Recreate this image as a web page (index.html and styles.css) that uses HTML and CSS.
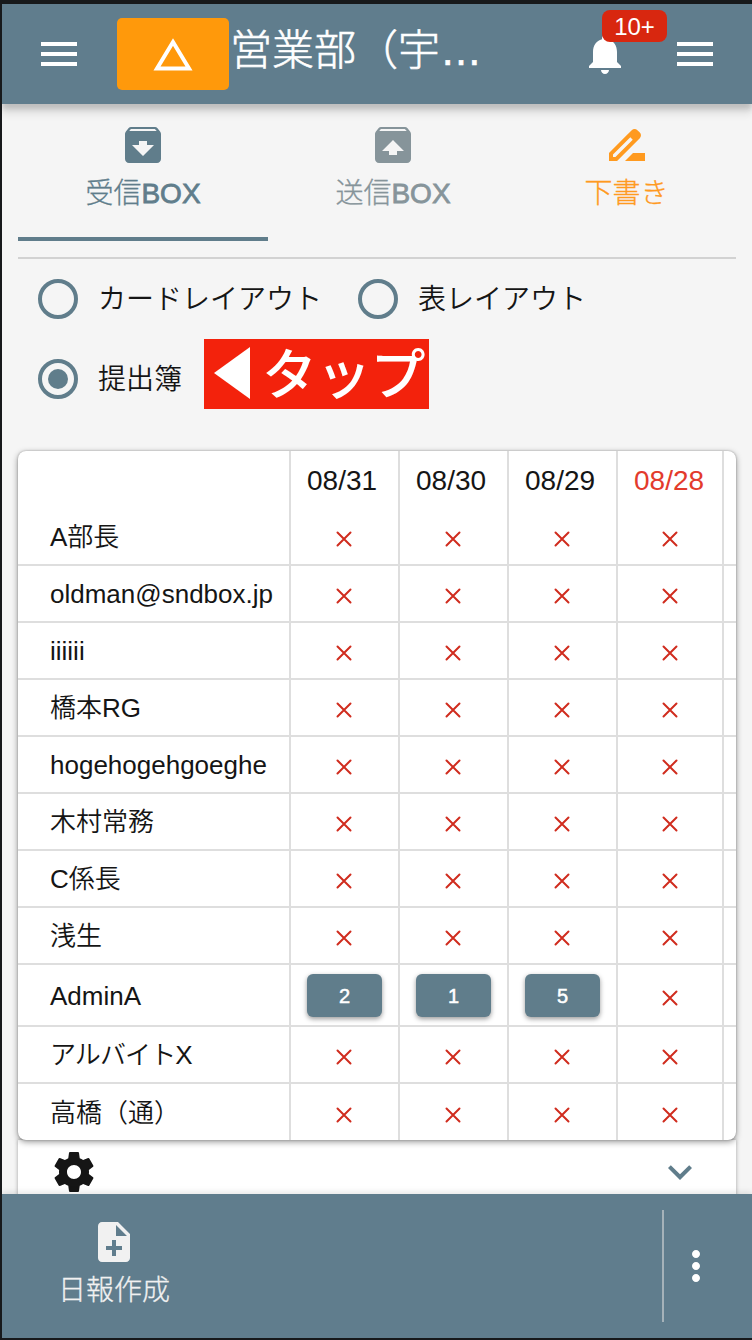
FILE: index.html
```
<!DOCTYPE html>
<html lang="ja">
<head>
<meta charset="utf-8">
<title>提出簿</title>
<link rel="stylesheet" href="styles.css">
</head>
<body>
<div class="app">
  <header class="topbar">
    <svg class="icon menu-left" viewBox="0 0 24 24"><path d="M3 18h18v-2H3v2zm0-5h18v-2H3v2zm0-7v2h18V6H3z"/></svg>
    <button class="alert-btn"><svg width="42" height="34" viewBox="0 0 42 34"><path d="M21 5 37 31.500H5z" fill="none" stroke="#fff" stroke-width="4"/></svg></button>
    <h1 class="title">営業部（宇…</h1>
    <div class="bell">
      <svg class="icon" viewBox="0 0 24 24"><path d="M12 22c1.100 0 2-.9 2-2h-4c0 1.100.89 2 2 2zm6-6v-5c0-3.070-1.640-5.640-4.500-6.320V4c0-.83-.67-1.500-1.500-1.500s-1.500.67-1.500 1.500v.68C7.630 5.360 6 7.920 6 11v5l-2 2v1h16v-1l-2-2z"/></svg>
      <span class="badge">10+</span>
    </div>
    <svg class="icon menu-right" viewBox="0 0 24 24"><path d="M3 18h18v-2H3v2zm0-5h18v-2H3v2zm0-7v2h18V6H3z"/></svg>
  </header>

  <main class="content">
    <nav class="tabs">
      <a class="tab active">
        <svg class="icon" viewBox="0 0 24 24"><path d="M20.540 5.230l-1.390-1.680C18.880 3.210 18.470 3 18 3H6c-.47 0-.88.21-1.160.55L3.460 5.230C3.170 5.570 3 6.020 3 6.500V19c0 1.100.9 2 2 2h14c1.100 0 2-.9 2-2V6.500c0-.48-.17-.93-.46-1.270zM12 17.500L6.500 12H10v-2h4v2h3.500L12 17.500zM5.120 5l.81-1h12l.94 1H5.120z"/></svg>
        <span>受信<b>BOX</b></span>
      </a>
      <a class="tab">
        <svg class="icon" viewBox="0 0 24 24"><path d="M20.550 5.220l-1.390-1.680C18.880 3.210 18.470 3 18 3H6c-.47 0-.88.21-1.150.55L3.460 5.220C3.170 5.570 3 6.010 3 6.500V19c0 1.100.89 2 2 2h14c1.100 0 2-.9 2-2V6.500c0-.49-.17-.93-.45-1.280zM12 9.500l5.500 5.500H14v2h-4v-2H6.500L12 9.500zM5.120 5l.82-1h12l.93 1H5.120z"/></svg>
        <span>送信<b>BOX</b></span>
      </a>
      <a class="tab draft">
        <svg class="icon" viewBox="0 0 24 24"><path d="M18.410 5.800L17.200 4.590c-.78-.78-2.050-.78-2.830 0l-2.680 2.680L3 15.960V20h4.040l8.740-8.740 2.630-2.630c.79-.78.79-2.050 0-2.830zM6.210 18H5v-1.210l8.660-8.660 1.210 1.210L6.210 18zM11 20l4-4h6v4H11z"/></svg>
        <span>下書き</span>
      </a>
    </nav>

    <div class="layouts">
      <label class="choice"><i class="radio"></i><span>カードレイアウト</span></label>
      <label class="choice"><i class="radio"></i><span>表レイアウト</span></label>
      <label class="choice"><i class="radio on"></i><span>提出簿</span></label>
      <div class="tap"><svg width="37" height="52" viewBox="0 0 37 52"><path d="M0 26 36 0v52z" fill="#fff"/></svg><span>タップ</span></div>
    </div>

    <section class="sheet" id="sheet"></section>

    <section class="settings">
      <svg class="icon gear" viewBox="0 0 24 24"><path d="M19.430 12.980c.04-.32.07-.64.07-.98s-.03-.66-.07-.98l2.110-1.650c.19-.15.24-.42.12-.64l-2-3.460c-.12-.22-.39-.3-.61-.22l-2.490 1c-.52-.4-1.080-.73-1.690-.98l-.38-2.650C14.460 2.180 14.250 2 14 2h-4c-.25 0-.46.18-.49.42l-.38 2.650c-.61.25-1.170.59-1.690.98l-2.490-1c-.23-.09-.49 0-.61.22l-2 3.460c-.13.22-.07.49.12.64l2.110 1.650c-.04.32-.07.65-.07.98s.03.66.07.98l-2.110 1.650c-.19.15-.24.42-.12.64l2 3.460c.12.22.39.3.61.22l2.490-1c.52.4 1.080.73 1.690.98l.38 2.650c.03.24.24.42.49.42h4c.25 0 .46-.18.49-.42l.38-2.650c.61-.25 1.170-.59 1.690-.98l2.490 1c.23.09.49 0 .61-.22l2-3.460c.12-.22.07-.49-.12-.64l-2.110-1.650zM12 15.500c-1.930 0-3.500-1.570-3.500-3.500s1.570-3.500 3.500-3.500 3.500 1.570 3.500 3.500-1.570 3.500-3.500 3.500z"/></svg>
      <svg class="icon chevron" viewBox="0 0 24 24"><path d="M7.410 8.590L12 13.170l4.590-4.580L18 10l-6 6-6-6 1.410-1.410z"/></svg>
    </section>
  </main>

  <footer class="bottombar">
    <div class="create">
      <svg class="icon" viewBox="0 0 24 24"><path d="M14 2H6c-1.100 0-1.990.9-1.990 2L4 20c0 1.100.89 2 1.990 2H18c1.100 0 2-.9 2-2V8l-6-6zm2 14h-3v3h-2v-3H8v-2h3v-3h2v3h3v2zm-3-7V3.500L18.500 9H13z"/></svg>
      <span>日報作成</span>
    </div>
    <div class="more"><svg class="icon" viewBox="0 0 24 24"><path d="M12 8c1.100 0 2-.9 2-2s-.9-2-2-2-2 .9-2 2 .9 2 2 2zm0 2c-1.100 0-2 .9-2 2s.9 2 2 2 2-.9 2-2-.9-2-2-2zm0 6c-1.100 0-2 .9-2 2s.9 2 2 2 2-.9 2-2-.9-2-2-2z"/></svg></div>
  </footer>
</div>
<script src="sheet.js"></script>
</body>
</html>
```
FILE: styles.css
```
* { box-sizing: border-box; }
body {
  margin: 0;
  font-family: "Liberation Sans", "Noto Sans CJK JP", sans-serif;
  color: #151515;
}
.app {
  width: 752px;
  height: 1340px;
  border: solid #17191b;
  border-width: 4px 0 2px 2px;
  background: #f5f5f5;
  display: flex;
  flex-direction: column;
  overflow: hidden;
}
.icon { width: 48px; height: 48px; fill: currentColor; display: block; flex: none; }

.topbar {
  height: 100px;
  flex: none;
  background: #607d8d;
  color: #fff;
  display: flex;
  align-items: center;
  padding: 0 33px;
  box-shadow: 0 5px 5px rgba(0,0,0,.15), 0 10px 8px rgba(0,0,0,.09);
  z-index: 1;
}
.alert-btn {
  width: 112px;
  height: 72px;
  margin-left: 34px;
  padding: 0;
  border: 0;
  border-radius: 5px;
  background: #ff990b;
  display: flex;
  align-items: center;
  justify-content: center;
}
.title {
  margin: 0 0 6px 1px;
  flex: 1;
  font-size: 42px;
  line-height: 60px;
  font-weight: 300;
  white-space: nowrap;
  -webkit-text-stroke: .6px currentColor;
}
.bell { position: relative; margin-right: 42px; }
.badge {
  position: absolute;
  left: 21px;
  top: -20px;
  width: 65px;
  height: 32px;
  border-radius: 8px;
  background: #d8270f;
  font-size: 24px;
  line-height: 34px;
  text-align: center;
}

.content { flex: 1; min-height: 0; overflow: hidden; padding: 0 16px; }
.tabs {
  display: grid;
  grid-template-columns: 250px 250px 216px;
  height: 155px;
  padding-top: 17px;
  border-bottom: 2px solid #d2d2d2;
  margin-bottom: 20px;
}
.tab {
  height: 120px;
  display: flex;
  flex-direction: column;
  align-items: center;
  font-size: 28px;
  line-height: 40px;
  font-weight: 300;
  color: #86949a;
  -webkit-text-stroke: .3px currentColor;
}
.tab span { margin-top: 5px; }
.tab b { font-weight: 400; -webkit-text-stroke: .8px currentColor; }
.tab.active { color: #607d8b; border-bottom: 4px solid #607d8b; }
.tab.draft { color: #ff9a1f; padding-left: 1px; }

.layouts {
  display: flex;
  flex-wrap: wrap;
  row-gap: 40px;
  padding-left: 20px;
  height: 172px;
  align-content: flex-start;
}
.choice {
  display: flex;
  align-items: center;
  gap: 20px;
  height: 40px;
  margin-right: 36px;
  font-size: 28px;
  line-height: 40px;
  font-weight: 350;
  white-space: nowrap;
}
.choice span { padding-top: 1px; }
.choice:nth-child(2) { margin-right: 100px; }
.choice:nth-child(3) { margin-right: 22px; }
.radio {
  width: 40px;
  height: 40px;
  border: 4px solid #607d8b;
  border-radius: 50%;
  display: flex;
  align-items: center;
  justify-content: center;
}
.radio.on::after { content: ""; width: 20px; height: 20px; border-radius: 50%; background: #607d8b; }
.tap {
  width: 225px;
  height: 70px;
  margin: -20px 0 -10px;
  padding-left: 10px;
  background: #f3220c;
  color: #fff;
  display: flex;
  align-items: center;
  gap: 11px;
  font: 500 55px/68px "Noto Sans CJK JP", sans-serif;
  letter-spacing: -.8px;
}
.tap svg { margin-bottom: 2px; }
.tap span { padding-bottom: 8px; }

.sheet {
  position: relative;
  height: 689px;
  background: #fff;
  border-radius: 8px;
  overflow: hidden;
  box-shadow: 0 0 2px rgba(0,0,0,.3), 0 2px 6px rgba(0,0,0,.4);
}
.row {
  display: grid;
  grid-template-columns: 271px 109px 109px 109px 106px 14px;
  height: 57px;
}
.row.head { height: 58px; }
.row.tall { height: 62px; }
.cell { border-left: 2px solid #dedede; border-bottom: 2px solid #dedede; display: flex; align-items: center; justify-content: center; }
.cell:first-child { border-left: 0; justify-content: flex-start; padding-left: 32px; font-size: 26px; line-height: 40px; font-weight: 350; white-space: nowrap; }
.cell.latin { padding-top: 1px; }
.cell.cjk { padding-top: 1px; }
.cell.kana { letter-spacing: -.9px; }
.head .cell { border-bottom: 0; justify-content: flex-start; padding: 2px 0 0 16px; font-size: 28px; }
.row:last-child .cell { border-bottom: 0; }
.date.holiday { color: #e33b2c; }
.cross { width: 16px; height: 16px; margin: 5px 1px 0 0; stroke: #d02c1e; stroke-width: 2; stroke-linecap: round; }
.count {
  width: 75px;
  height: 43px;
  border: 0;
  border-radius: 6px;
  background: #607d8b;
  color: #fff;
  font: 20px "Liberation Sans", sans-serif;
  -webkit-text-stroke: .5px #fff;
  padding-top: 3px;
  box-shadow: 0 2px 5px rgba(0,0,0,.4);
}

.settings {
  height: 80px;
  padding: 8px 32px;
  display: flex;
  justify-content: space-between;
  background: #fff;
  box-shadow: 0 0 4px rgba(0,0,0,.35);
}
.gear { color: #151515; }
.chevron { color: #607d8b; }

.bottombar {
  height: 144px;
  flex: none;
  z-index: 1;
  background: #607d8d;
  box-shadow: 0 -2px 6px rgba(0,0,0,.1);
  display: flex;
  justify-content: space-between;
  padding: 16px 0;
  color: #fff;
}
.create {
  width: 224px;
  padding-top: 8px;
  display: flex;
  flex-direction: column;
  align-items: center;
  color: #f1f1f1;
  font-size: 28px;
  line-height: 40px;
  font-weight: 300;
  -webkit-text-stroke: .3px currentColor;
}
.create span { margin-top: 5px; }
.more { width: 90px; border-left: 2px solid #a5b2b9; display: flex; align-items: center; padding-left: 8px; }
```
FILE: sheet.js
```
const days = ["08/31", "08/30", "08/29", "08/28"];
const members = [
  ["A部長"], ["oldman@sndbox.jp"], ["iiiiii"], ["橋本RG"], ["hogehogehgoeghe"],
  ["木村常務"], ["C係長"], ["浅生"], ["AdminA", 2, 1, 5], ["アルバイトX"], ["高橋（通）"]
];
const cross = '<svg class="cross" viewBox="0 0 16 16"><path d="M1.500 1.500l13 13M14.500 1.500l-13 13"/></svg>';
const cell = (html, cls = "") => `<div class="cell ${cls}">${html}</div>`;
const script = name => /^[\x20-\x7e]+$/.test(name) ? "latin" : /^[ァ-ン]/.test(name) ? "cjk kana" : "cjk";

let html = `<div class="row head">${cell("")}${days.map((d, i) => cell(d, i === 3 ? "date holiday" : "date")).join("")}${cell("")}</div>`;
for (const [name, ...counts] of members) {
  const marks = days.map((_, i) => cell(counts[i] ? `<button class="count">${counts[i]}</button>` : cross)).join("");
  html += `<div class="row${counts.length ? " tall" : ""}">${cell(name, script(name))}${marks}${cell("")}</div>`;
}
document.getElementById("sheet").innerHTML = html;
```
